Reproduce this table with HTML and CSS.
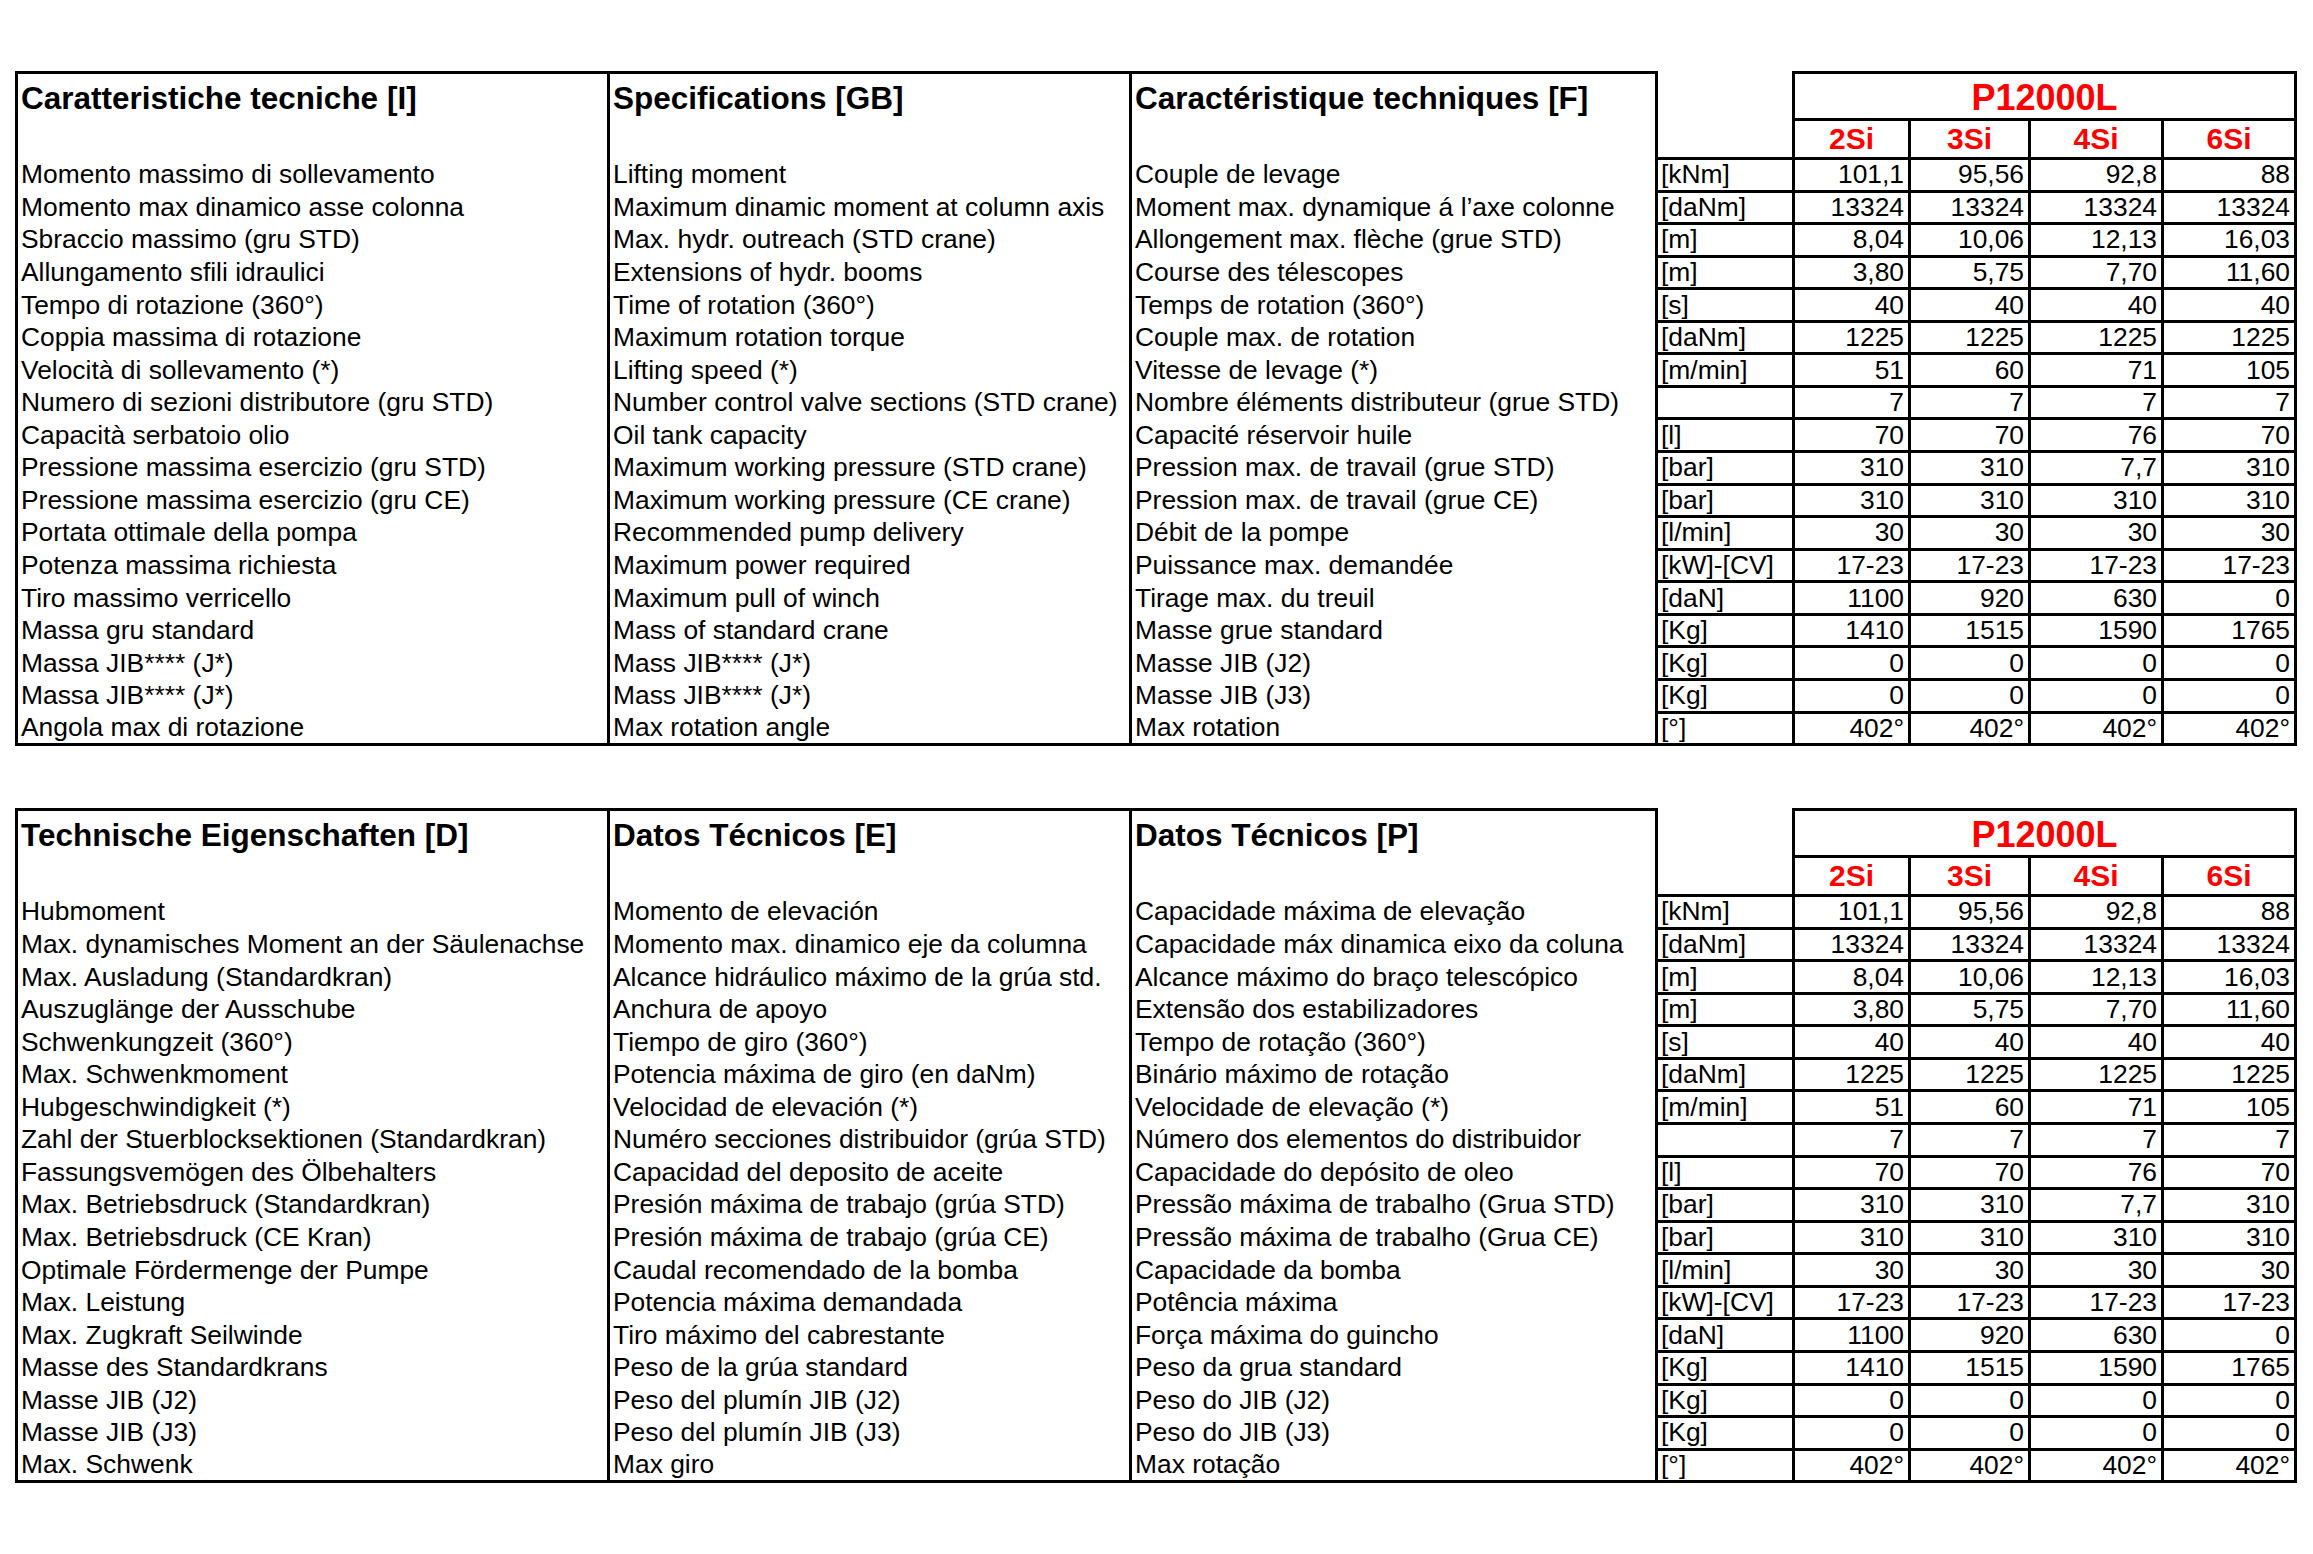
FILE: index.html
```html
<!DOCTYPE html>
<html lang="it">
<head>
<meta charset="utf-8">
<title>P12000L – Caratteristiche tecniche</title>
<link rel="stylesheet" href="styles.css">
</head>
<body>
<main class="page">

<table class="spec">
  <colgroup>
    <col class="c-txt1"><col class="c-txt2"><col class="c-txt3"><col class="c-unit">
    <col class="c-n1"><col class="c-n2"><col class="c-n3"><col class="c-n4">
  </colgroup>
  <tr class="row-model">
    <td class="txt head">Caratteristiche tecniche [I]</td>
    <td class="txt head">Specifications [GB]</td>
    <td class="txt head">Caractéristique techniques [F]</td>
    <td class="unit-head"></td>
    <td class="model" colspan="4">P12000L</td>
  </tr>
  <tr class="row-var">
    <td class="txt"></td><td class="txt"></td><td class="txt"></td>
    <td class="unit-head"></td>
    <td class="var">2Si</td><td class="var">3Si</td><td class="var">4Si</td><td class="var">6Si</td>
  </tr>
  <tr><td class="txt">Momento massimo di sollevamento</td><td class="txt">Lifting moment</td><td class="txt">Couple de levage</td><td class="unit">[kNm]</td><td class="num">101,1</td><td class="num">95,56</td><td class="num">92,8</td><td class="num">88</td></tr>
  <tr><td class="txt">Momento max dinamico asse colonna</td><td class="txt">Maximum dinamic moment at column axis</td><td class="txt">Moment max. dynamique á l’axe colonne</td><td class="unit">[daNm]</td><td class="num">13324</td><td class="num">13324</td><td class="num">13324</td><td class="num">13324</td></tr>
  <tr><td class="txt">Sbraccio massimo (gru STD)</td><td class="txt">Max. hydr. outreach (STD crane)</td><td class="txt">Allongement max. flèche (grue STD)</td><td class="unit">[m]</td><td class="num">8,04</td><td class="num">10,06</td><td class="num">12,13</td><td class="num">16,03</td></tr>
  <tr><td class="txt">Allungamento sfili idraulici</td><td class="txt">Extensions of hydr. booms</td><td class="txt">Course des télescopes</td><td class="unit">[m]</td><td class="num">3,80</td><td class="num">5,75</td><td class="num">7,70</td><td class="num">11,60</td></tr>
  <tr><td class="txt">Tempo di rotazione (360°)</td><td class="txt">Time of rotation (360°)</td><td class="txt">Temps de rotation (360°)</td><td class="unit">[s]</td><td class="num">40</td><td class="num">40</td><td class="num">40</td><td class="num">40</td></tr>
  <tr><td class="txt">Coppia massima di rotazione</td><td class="txt">Maximum rotation torque</td><td class="txt">Couple max. de rotation</td><td class="unit">[daNm]</td><td class="num">1225</td><td class="num">1225</td><td class="num">1225</td><td class="num">1225</td></tr>
  <tr><td class="txt">Velocità di sollevamento (*)</td><td class="txt">Lifting speed (*)</td><td class="txt">Vitesse de levage (*)</td><td class="unit">[m/min]</td><td class="num">51</td><td class="num">60</td><td class="num">71</td><td class="num">105</td></tr>
  <tr><td class="txt">Numero di sezioni distributore (gru STD)</td><td class="txt">Number control valve sections (STD crane)</td><td class="txt">Nombre éléments distributeur (grue STD)</td><td class="unit"></td><td class="num">7</td><td class="num">7</td><td class="num">7</td><td class="num">7</td></tr>
  <tr><td class="txt">Capacità serbatoio olio</td><td class="txt">Oil tank capacity</td><td class="txt">Capacité réservoir huile</td><td class="unit">[l]</td><td class="num">70</td><td class="num">70</td><td class="num">76</td><td class="num">70</td></tr>
  <tr><td class="txt">Pressione massima esercizio (gru STD)</td><td class="txt">Maximum working pressure (STD crane)</td><td class="txt">Pression max. de travail (grue STD)</td><td class="unit">[bar]</td><td class="num">310</td><td class="num">310</td><td class="num">7,7</td><td class="num">310</td></tr>
  <tr><td class="txt">Pressione massima esercizio (gru CE)</td><td class="txt">Maximum working pressure (CE crane)</td><td class="txt">Pression max. de travail (grue CE)</td><td class="unit">[bar]</td><td class="num">310</td><td class="num">310</td><td class="num">310</td><td class="num">310</td></tr>
  <tr><td class="txt">Portata ottimale della pompa</td><td class="txt">Recommended pump delivery</td><td class="txt">Débit de la pompe</td><td class="unit">[l/min]</td><td class="num">30</td><td class="num">30</td><td class="num">30</td><td class="num">30</td></tr>
  <tr><td class="txt">Potenza massima richiesta</td><td class="txt">Maximum power required</td><td class="txt">Puissance max. demandée</td><td class="unit">[kW]-[CV]</td><td class="num">17-23</td><td class="num">17-23</td><td class="num">17-23</td><td class="num">17-23</td></tr>
  <tr><td class="txt">Tiro massimo verricello</td><td class="txt">Maximum pull of winch</td><td class="txt">Tirage max. du treuil</td><td class="unit">[daN]</td><td class="num">1100</td><td class="num">920</td><td class="num">630</td><td class="num">0</td></tr>
  <tr><td class="txt">Massa gru standard</td><td class="txt">Mass of standard crane</td><td class="txt">Masse grue standard</td><td class="unit">[Kg]</td><td class="num">1410</td><td class="num">1515</td><td class="num">1590</td><td class="num">1765</td></tr>
  <tr><td class="txt">Massa JIB**** (J*)</td><td class="txt">Mass JIB**** (J*)</td><td class="txt">Masse JIB (J2)</td><td class="unit">[Kg]</td><td class="num">0</td><td class="num">0</td><td class="num">0</td><td class="num">0</td></tr>
  <tr><td class="txt">Massa JIB**** (J*)</td><td class="txt">Mass JIB**** (J*)</td><td class="txt">Masse JIB (J3)</td><td class="unit">[Kg]</td><td class="num">0</td><td class="num">0</td><td class="num">0</td><td class="num">0</td></tr>
  <tr class="last"><td class="txt">Angola max di rotazione</td><td class="txt">Max rotation angle</td><td class="txt">Max rotation</td><td class="unit">[°]</td><td class="num">402°</td><td class="num">402°</td><td class="num">402°</td><td class="num">402°</td></tr>
</table>

<table class="spec">
  <colgroup>
    <col class="c-txt1"><col class="c-txt2"><col class="c-txt3"><col class="c-unit">
    <col class="c-n1"><col class="c-n2"><col class="c-n3"><col class="c-n4">
  </colgroup>
  <tr class="row-model">
    <td class="txt head">Technische Eigenschaften [D]</td>
    <td class="txt head">Datos Técnicos [E]</td>
    <td class="txt head">Datos Técnicos [P]</td>
    <td class="unit-head"></td>
    <td class="model" colspan="4">P12000L</td>
  </tr>
  <tr class="row-var">
    <td class="txt"></td><td class="txt"></td><td class="txt"></td>
    <td class="unit-head"></td>
    <td class="var">2Si</td><td class="var">3Si</td><td class="var">4Si</td><td class="var">6Si</td>
  </tr>
  <tr><td class="txt">Hubmoment</td><td class="txt">Momento de elevación</td><td class="txt">Capacidade máxima de elevação</td><td class="unit">[kNm]</td><td class="num">101,1</td><td class="num">95,56</td><td class="num">92,8</td><td class="num">88</td></tr>
  <tr><td class="txt">Max. dynamisches Moment an der Säulenachse</td><td class="txt">Momento max. dinamico eje da columna</td><td class="txt">Capacidade máx dinamica eixo da coluna</td><td class="unit">[daNm]</td><td class="num">13324</td><td class="num">13324</td><td class="num">13324</td><td class="num">13324</td></tr>
  <tr><td class="txt">Max. Ausladung (Standardkran)</td><td class="txt">Alcance hidráulico máximo de la grúa std.</td><td class="txt">Alcance máximo do braço telescópico</td><td class="unit">[m]</td><td class="num">8,04</td><td class="num">10,06</td><td class="num">12,13</td><td class="num">16,03</td></tr>
  <tr><td class="txt">Auszuglänge der Ausschube</td><td class="txt">Anchura de apoyo</td><td class="txt">Extensão dos estabilizadores</td><td class="unit">[m]</td><td class="num">3,80</td><td class="num">5,75</td><td class="num">7,70</td><td class="num">11,60</td></tr>
  <tr><td class="txt">Schwenkungzeit (360°)</td><td class="txt">Tiempo de giro (360°)</td><td class="txt">Tempo de rotação (360°)</td><td class="unit">[s]</td><td class="num">40</td><td class="num">40</td><td class="num">40</td><td class="num">40</td></tr>
  <tr><td class="txt">Max. Schwenkmoment</td><td class="txt">Potencia máxima de giro (en daNm)</td><td class="txt">Binário máximo de rotação</td><td class="unit">[daNm]</td><td class="num">1225</td><td class="num">1225</td><td class="num">1225</td><td class="num">1225</td></tr>
  <tr><td class="txt">Hubgeschwindigkeit (*)</td><td class="txt">Velocidad de elevación (*)</td><td class="txt">Velocidade de elevação (*)</td><td class="unit">[m/min]</td><td class="num">51</td><td class="num">60</td><td class="num">71</td><td class="num">105</td></tr>
  <tr><td class="txt">Zahl der Stuerblocksektionen (Standardkran)</td><td class="txt">Numéro secciones distribuidor (grúa STD)</td><td class="txt">Número dos elementos do distribuidor</td><td class="unit"></td><td class="num">7</td><td class="num">7</td><td class="num">7</td><td class="num">7</td></tr>
  <tr><td class="txt">Fassungsvemögen des Ölbehalters</td><td class="txt">Capacidad del deposito de aceite</td><td class="txt">Capacidade do depósito de oleo</td><td class="unit">[l]</td><td class="num">70</td><td class="num">70</td><td class="num">76</td><td class="num">70</td></tr>
  <tr><td class="txt">Max. Betriebsdruck (Standardkran)</td><td class="txt">Presión máxima de trabajo (grúa STD)</td><td class="txt">Pressão máxima de trabalho (Grua STD)</td><td class="unit">[bar]</td><td class="num">310</td><td class="num">310</td><td class="num">7,7</td><td class="num">310</td></tr>
  <tr><td class="txt">Max. Betriebsdruck (CE Kran)</td><td class="txt">Presión máxima de trabajo (grúa CE)</td><td class="txt">Pressão máxima de trabalho (Grua CE)</td><td class="unit">[bar]</td><td class="num">310</td><td class="num">310</td><td class="num">310</td><td class="num">310</td></tr>
  <tr><td class="txt">Optimale Fördermenge der Pumpe</td><td class="txt">Caudal recomendado de la bomba</td><td class="txt">Capacidade da bomba</td><td class="unit">[l/min]</td><td class="num">30</td><td class="num">30</td><td class="num">30</td><td class="num">30</td></tr>
  <tr><td class="txt">Max. Leistung</td><td class="txt">Potencia máxima demandada</td><td class="txt">Potência máxima</td><td class="unit">[kW]-[CV]</td><td class="num">17-23</td><td class="num">17-23</td><td class="num">17-23</td><td class="num">17-23</td></tr>
  <tr><td class="txt">Max. Zugkraft Seilwinde</td><td class="txt">Tiro máximo del cabrestante</td><td class="txt">Força máxima do guincho</td><td class="unit">[daN]</td><td class="num">1100</td><td class="num">920</td><td class="num">630</td><td class="num">0</td></tr>
  <tr><td class="txt">Masse des Standardkrans</td><td class="txt">Peso de la grúa standard</td><td class="txt">Peso da grua standard</td><td class="unit">[Kg]</td><td class="num">1410</td><td class="num">1515</td><td class="num">1590</td><td class="num">1765</td></tr>
  <tr><td class="txt">Masse JIB (J2)</td><td class="txt">Peso del plumín JIB (J2)</td><td class="txt">Peso do JIB (J2)</td><td class="unit">[Kg]</td><td class="num">0</td><td class="num">0</td><td class="num">0</td><td class="num">0</td></tr>
  <tr><td class="txt">Masse JIB (J3)</td><td class="txt">Peso del plumín JIB (J3)</td><td class="txt">Peso do JIB (J3)</td><td class="unit">[Kg]</td><td class="num">0</td><td class="num">0</td><td class="num">0</td><td class="num">0</td></tr>
  <tr class="last"><td class="txt">Max. Schwenk</td><td class="txt">Max giro</td><td class="txt">Max rotação</td><td class="unit">[°]</td><td class="num">402°</td><td class="num">402°</td><td class="num">402°</td><td class="num">402°</td></tr>
</table>

</main>
</body>
</html>
```

FILE: styles.css
```css
html, body {
  margin: 0;
  padding: 0;
  background: #ffffff;
}

body {
  font-family: "Liberation Sans", Arial, Helvetica, sans-serif;
  color: #000000;
}

.page {
  padding: 71px 0 0 15px;
  display: flex;
  flex-direction: column;
  align-items: flex-start;
  gap: 62px;
}

.spec {
  border-collapse: collapse;
  table-layout: fixed;
  font-size: 26.4px;
  line-height: 27px;
}

.c-txt1 { width: 592px; }
.c-txt2 { width: 522px; }
.c-txt3 { width: 526px; }
.c-unit { width: 137px; }
.c-n1 { width: 116px; }
.c-n2 { width: 120px; }
.c-n3 { width: 133px; }
.c-n4 { width: 133px; }

.spec td {
  padding: 0;
  white-space: nowrap;
  overflow: hidden;
  vertical-align: middle;
}

.spec tr { height: 32.57px; }
.spec .row-model { height: 46.6px; }
.spec .row-var { height: 39.4px; }

.txt {
  border-left: 3px solid #000;
  border-right: 3px solid #000;
  padding-left: 3px !important;
  text-align: left;
}

.head {
  border-top: 3px solid #000;
  font-weight: bold;
  font-size: 31.5px;
  line-height: 36px;
  vertical-align: bottom !important;
  padding-bottom: 3px !important;
}

.unit-head {
  border: none;
}

.unit {
  border: 3px solid #000;
  padding-left: 3px !important;
  text-align: left;
}

.num {
  border: 3px solid #000;
  text-align: right;
  padding-right: 4px !important;
}

.model {
  border: 3px solid #000;
  color: #ff0000;
  font-weight: bold;
  font-size: 36px;
  line-height: 41px;
  text-align: center;
  vertical-align: bottom !important;
}

.var {
  border: 3px solid #000;
  color: #ff0000;
  font-weight: bold;
  font-size: 30px;
  line-height: 34px;
  text-align: center;
  vertical-align: bottom !important;
  padding-bottom: 1px !important;
}

.last td {
  border-bottom: 3px solid #000;
}
```
